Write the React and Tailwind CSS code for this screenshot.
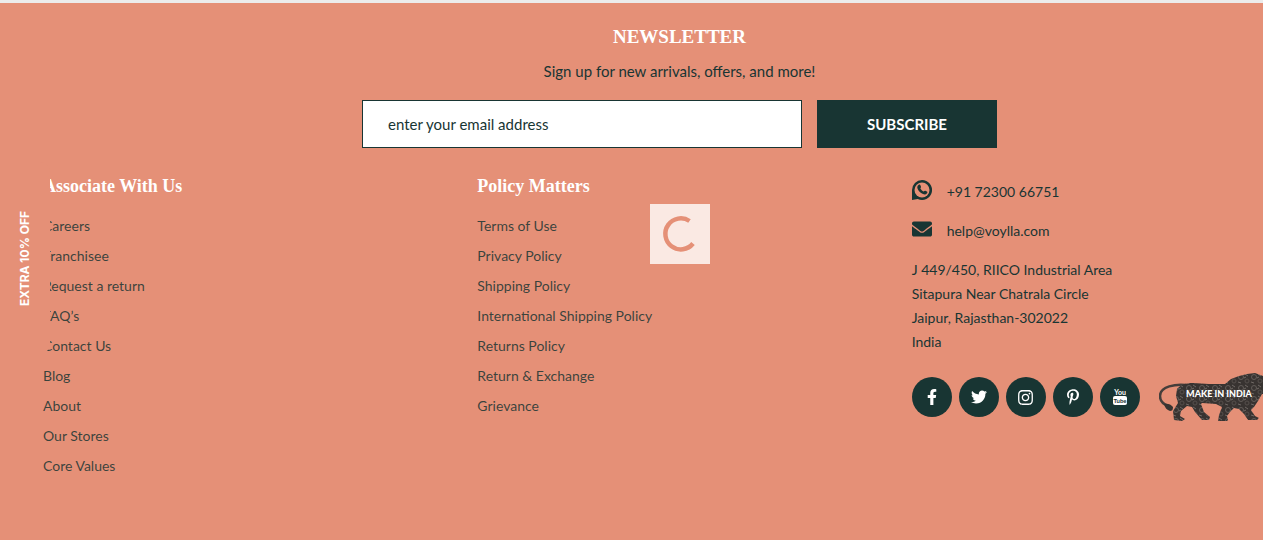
import { FaFacebookF, FaTwitter, FaInstagram, FaPinterestP, FaEnvelope } from "react-icons/fa";

const associateLinks = [
  "Careers",
  "Franchisee",
  "Request a return",
  "FAQ’s",
  "Contact Us",
  "Blog",
  "About",
  "Our Stores",
  "Core Values",
];

const policyLinks = [
  "Terms of Use",
  "Privacy Policy",
  "Shipping Policy",
  "International Shipping Policy",
  "Returns Policy",
  "Return & Exchange",
  "Grievance",
];

function YouTubeLogo() {
  return (
    <svg viewBox="0 0 16 18" className="h-[18px] w-4" aria-hidden="true">
      <text x="8" y="7" textAnchor="middle" fontSize="7" fontWeight="700" fill="#fff" fontFamily="Lato, sans-serif">You</text>
      <rect x="1" y="8" width="14" height="9" rx="2" fill="#fff" />
      <text x="8" y="15" textAnchor="middle" fontSize="6" fontWeight="700" fill="#183533" fontFamily="Lato, sans-serif">Tube</text>
    </svg>
  );
}

function WhatsAppIcon() {
  return (
    <svg viewBox="0 0 20 20" className="h-5 w-5" aria-hidden="true">
      <path d="M10 0a10 10 0 1 1-4.300 19L0 20V10A10 10 0 0 1 10 0z" fill="#183533" />
      <circle cx="10" cy="10" r="7.500" fill="#e59077" />
      <path d="M6.800 4.800c.7-.5 1.300-.3 1.600.4l.6 1.500c.2.600-.1 1-.7 1.600.8 1.600 1.800 2.600 3.400 3.300.7-.8 1.100-1.100 1.700-.8l1.500.8c.7.400.6 1 .1 1.700-.9 1.200-2.300 1.500-4 .8-2.700-1.100-4.600-3-5.500-5.500-.5-1.500-.1-2.900 1.300-3.800z" fill="#183533" />
    </svg>
  );
}

const socials = [
  { name: "Facebook", icon: <FaFacebookF size={16} /> },
  { name: "Twitter", icon: <FaTwitter size={16} /> },
  { name: "Instagram", icon: <FaInstagram size={17} /> },
  { name: "Pinterest", icon: <FaPinterestP size={16} /> },
  { name: "YouTube", icon: <YouTubeLogo /> },
];

function MakeInIndia() {
  return (
    <svg viewBox="0 0 116 48" className="h-12 w-[116px] shrink-0" role="img" aria-label="Make in India">
      <defs>
        <pattern id="gears" width="13" height="11" patternUnits="userSpaceOnUse">
          <rect width="13" height="11" fill="#383331" />
          <circle cx="4" cy="4" r="2.500" fill="none" stroke="#625b58" strokeWidth="1" />
          <circle cx="10" cy="8" r="2" fill="none" stroke="#544d4a" strokeWidth="1" />
          <path d="M8 1l3 2M1 9l3 1M7 5l2-1" stroke="#706965" strokeWidth="1" />
        </pattern>
      </defs>
      <path d="M27 12C17 11 1 13 1 23c0 5 3 8 8 10" fill="none" stroke="#453e3b" strokeWidth="2.500" />
      <path d="M5 31c3-1 7 0 9 3 0 3-1 4-3 4-3-1-5-3-6-7z" fill="#383331" />
      <path
        d="M18 16C21 12 27 10 34 10l16 1h16L72 6l8-3 8-2 8-1 8 3 5 5 4 4-2 8-8 1-4 7-4 6-3 3 4 6 4 2-2 2h-9l-4-6-5-5-5-1-4 4-3 4 1 4-2 2h-8l1-7 3-8-6-3-14-1-1 1 3 8 6 5-1 3h-7l-7-8-3-5-5-1-6 5-1 5 5 3-3 2-8-1-1-9 5-8-2-7z"
        fill="url(#gears)"
      />
      <text x="60" y="24" textAnchor="middle" fontSize="9" fontWeight="900" fill="#fff" fontFamily="Lato, sans-serif">MAKE IN INDIA</text>
    </svg>
  );
}

function LinkColumn({ title, links }) {
  return (
    <nav aria-label={title} className="pl-[15px]">
      <h2 className="font-['Liberation_Serif',serif] text-[18px] leading-6 font-bold text-white">{title}</h2>
      <ul className="mt-[13px] text-[14px] leading-[30px]">
        {links.map((label) => (
          <li key={label}>
            <a href="#" className="text-[#183533]/85">{label}</a>
          </li>
        ))}
      </ul>
    </nav>
  );
}

export default function App() {
  return (
    <div className="relative min-h-screen overflow-hidden border-t-[3px] border-[#ececec] bg-[#e59077] font-[Lato,sans-serif] text-[#183533]">
      <footer className="relative -mr-24 px-7 pt-5 pb-14">
        <section className="flex flex-col items-center">
          <h2 className="font-['Liberation_Serif',serif] text-[19px] leading-7 font-bold text-white">NEWSLETTER</h2>
          <p className="mt-2 text-[15px] leading-6">Sign up for new arrivals, offers, and more!</p>
          <form className="mt-[17px] flex gap-[15px]" onSubmit={(e) => e.preventDefault()}>
            <input
              type="email"
              aria-label="Email address"
              placeholder="enter your email address"
              className="h-12 w-[440px] border border-[#183533] bg-white px-[25px] text-[15px] placeholder:text-[#183533]"
            />
            <button type="submit" className="h-12 w-[180px] bg-[#183533] text-[15px] font-bold text-white">SUBSCRIBE</button>
          </form>
        </section>

        <div className="mt-[26px] grid grid-cols-3">
          <LinkColumn title="Associate With Us" links={associateLinks} />
          <LinkColumn title="Policy Matters" links={policyLinks} />
          <section className="pt-1 pl-[15px] text-[14px]">
            <a href="#" className="flex items-start gap-[15px]">
              <span className="pt-[2px]"><WhatsAppIcon /></span>
              <span className="pt-[2px] leading-6">+91 72300 66751</span>
            </a>
            <a href="#" className="mt-[13px] flex items-start gap-[15px]">
              <span className="pt-[2px]"><FaEnvelope size={20} /></span>
              <span className="pt-[2px] leading-6">help@voylla.com</span>
            </a>
            <address className="mt-[15px] leading-6 not-italic">
              J 449/450, RIICO Industrial Area
              <br />
              Sitapura Near Chatrala Circle
              <br />
              Jaipur, Rajasthan-302022
              <br />
              India
            </address>
            <div className="mt-[19px] flex items-center gap-[7px]">
              {socials.map(({ name, icon }) => (
                <a key={name} href="#" aria-label={name} className="flex size-10 shrink-0 items-center justify-center rounded-full bg-[#183533] text-white">
                  {icon}
                </a>
              ))}
              <div className="ml-3">
                <MakeInIndia />
              </div>
            </div>
          </section>
        </div>

        <div role="status" aria-label="Loading" className="absolute top-[201px] left-1/2 flex size-[60px] -translate-x-1/2 items-center justify-center bg-[#fae9e3]">
          <svg viewBox="0 0 60 60" className="size-full" aria-hidden="true">
            <path d="M39.500 17A15.500 15.500 0 1 0 43 39.500" fill="none" stroke="#e59077" strokeWidth="4.500" />
          </svg>
        </div>
      </footer>

      <button type="button" className="absolute top-[159px] left-0 flex h-[192px] w-[50px] items-center justify-center rounded-r-[10px] bg-[#e59077]">
        <span className="rotate-180 font-[Inter,sans-serif] text-[12px] leading-4 font-bold whitespace-nowrap text-white [writing-mode:vertical-rl]">EXTRA 10% OFF</span>
      </button>
    </div>
  );
}
